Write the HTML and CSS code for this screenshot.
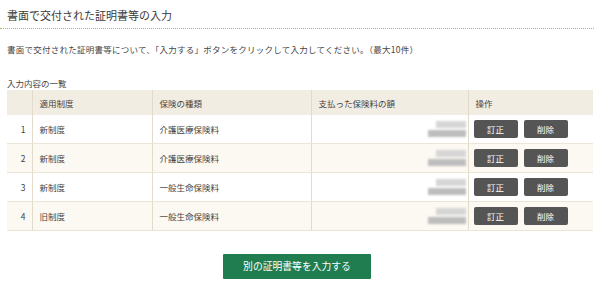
FILE: index.html
```html
<!DOCTYPE html>
<html lang="ja">
<head>
    <meta charset="UTF-8">
    <title>書面で交付された証明書等の入力</title>
    <link rel="stylesheet" href="styles.css">
</head>
<body>
    <div class="page">
        <h1 class="title">書面で交付された証明書等の入力</h1>

        <p class="lead">書面で交付された証明書等について、「入力する」ボタンをクリックして入力してください。（最大10件）</p>

        <div class="caption">入力内容の一覧</div>
        <table class="list">
            <colgroup>
                <col class="c-no">
                <col class="c-sys">
                <col class="c-kind">
                <col class="c-amount">
                <col class="c-ops">
            </colgroup>
            <thead>
                <tr>
                    <th></th>
                    <th>適用制度</th>
                    <th>保険の種類</th>
                    <th>支払った保険料の額</th>
                    <th>操作</th>
                </tr>
            </thead>
            <tbody>
                <tr>
                    <td class="no">1</td>
                    <td>新制度</td>
                    <td>介護医療保険料</td>
                    <td class="amount"><span class="masked"><i class="m1"></i><i class="m2"></i></span></td>
                    <td class="ops"><button class="btn">訂正</button><button class="btn">削除</button></td>
                </tr>
                <tr>
                    <td class="no">2</td>
                    <td>新制度</td>
                    <td>介護医療保険料</td>
                    <td class="amount"><span class="masked"><i class="m1"></i><i class="m2"></i></span></td>
                    <td class="ops"><button class="btn">訂正</button><button class="btn">削除</button></td>
                </tr>
                <tr>
                    <td class="no">3</td>
                    <td>新制度</td>
                    <td>一般生命保険料</td>
                    <td class="amount"><span class="masked"><i class="m1"></i><i class="m2"></i></span></td>
                    <td class="ops"><button class="btn">訂正</button><button class="btn">削除</button></td>
                </tr>
                <tr>
                    <td class="no">4</td>
                    <td>旧制度</td>
                    <td>一般生命保険料</td>
                    <td class="amount"><span class="masked"><i class="m1"></i><i class="m2"></i></span></td>
                    <td class="ops"><button class="btn">訂正</button><button class="btn">削除</button></td>
                </tr>
            </tbody>
        </table>

        <div class="actions">
            <button class="btn-main">別の証明書等を入力する</button>
        </div>
    </div>
</body>
</html>
```

FILE: styles.css
```css
/* Base */
body {
    margin: 0;
    background: #fff;
    color: #444;
    font-family: "Noto Sans CJK JP", "Noto Sans", sans-serif;
}

.page {
    width: 594px;
}

/* Heading */
.title {
    margin: 0;
    padding: 8px 7px 6px;
    font-size: 11px;
    line-height: 14px;
    font-weight: normal;
    color: #3a3a3a;
    border-bottom: 1px dotted #c4b13c;
}

.lead {
    margin: 14px 7px 0;
    font-size: 8.5px;
    line-height: 12px;
    letter-spacing: 0.25px;
}

.caption {
    margin: 22px 7px 1px;
    font-size: 8.5px;
    line-height: 12px;
}

/* Table */
.list {
    margin-left: 7px;
    width: 586px;
    border-collapse: collapse;
    table-layout: fixed;
    font-size: 8.5px;
}

.c-no { width: 25px; }
.c-sys { width: 120px; }
.c-kind { width: 159px; }
.c-amount { width: 157px; }
.c-ops { width: 125px; }

.list th {
    height: 25px;
    padding: 0 7px;
    background: #f1ede3;
    font-weight: normal;
    text-align: left;
    border-left: 1px solid #e2dbcc;
}

.list th:first-child,
.list td:first-child {
    border-left: none;
}

.list td {
    height: 28px;
    padding: 0 7px;
    border-left: 1px solid #e2dbcc;
    border-bottom: 1px solid #ebe5d8;
    vertical-align: middle;
}

.list tbody tr:nth-child(even) td {
    background: #fcf9f2;
}

.list td.no {
    text-align: right;
    padding-right: 6px;
}

.list td.amount {
    text-align: right;
    padding-right: 2px;
}

.masked {
    display: inline-flex;
    flex-direction: column;
    align-items: flex-end;
    gap: 2px;
    filter: blur(1.2px);
    vertical-align: middle;
}

.masked i {
    display: block;
    height: 7px;
}

.masked .m1 {
    width: 30px;
    background: #d6d6d6;
}

.masked .m2 {
    width: 38px;
    background: #bdbdbd;
}

.list td.ops {
    padding: 0 0 0 5px;
    white-space: nowrap;
}

/* Buttons */
.btn {
    width: 44px;
    height: 18px;
    margin-right: 6px;
    padding: 0;
    border: none;
    border-radius: 2px;
    background: #555;
    color: #fff;
    font-family: inherit;
    font-size: 8.5px;
    vertical-align: middle;
    cursor: pointer;
}

.actions {
    margin-top: 20px;
    text-align: center;
}

.btn-main {
    width: 148px;
    height: 25px;
    padding: 0;
    border: none;
    border-radius: 1px;
    background: #1f7d4f;
    color: #fff;
    font-family: inherit;
    font-size: 9.8px;
    cursor: pointer;
}
```
